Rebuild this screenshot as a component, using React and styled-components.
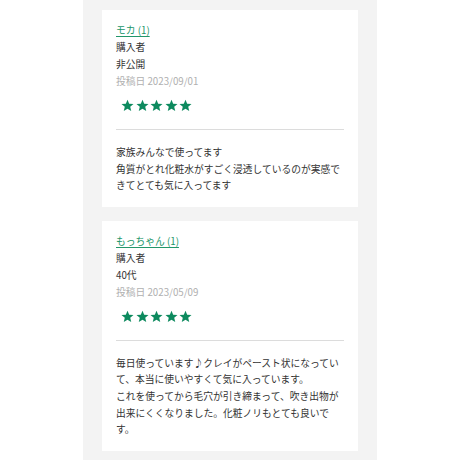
import styled, { createGlobalStyle } from "styled-components";

const GlobalStyle = createGlobalStyle`
  body {
    margin: 0;
    background: #fff;
    font-family: "Noto Sans CJK JP", sans-serif;
  }
`;

const Column = styled.div`
  width: 294px;
  margin: 0 auto;
  min-height: 460px;
  box-sizing: border-box;
  padding: 10px 19px 0;
  background-color: #f3f3f3;
  display: flex;
  flex-direction: column;
  gap: 14px;
`;

const Card = styled.div`
  background: #fff;
  padding: 12px 14px 13px;
`;

const Info = styled.div`
  font-size: 9.75px;
  line-height: 17px;
  color: #333;
`;

const Name = styled.a`
  display: block;
  color: #22966a;
  text-decoration: underline;
  text-underline-offset: 2px;
`;

const Date = styled.div`
  color: #b0b0b0;
`;

const Stars = styled.div`
  display: flex;
  gap: 1.6px;
  padding: 9px 0 0 5px;
  height: 13px;
`;

const Divider = styled.hr`
  border: none;
  border-top: 1px solid #dcdcdc;
  margin: 17px 0 14px;
`;

const Body = styled.p`
  margin: 0;
  font-size: 9.75px;
  line-height: 16.6px;
  color: #333;
  white-space: pre-line;
`;

const Star = () => (
  <svg width="13" height="13" viewBox="0 0 24 24">
    <path
      fill="#0d8a5e"
      d="M12 1.2l3.1 7.4 8 .6-6.1 5.2 1.9 7.8L12 18l-6.9 4.2 1.9-7.8L.9 9.2l8-.6z"
    />
  </svg>
);

const reviews = [
  {
    id: 1,
    name: "モカ (1)",
    status: "購入者",
    age: "非公開",
    date: "投稿日 2023/09/01",
    text: "家族みんなで使ってます\n角質がとれ化粧水がすごく浸透しているのが実感できてとても気に入ってます",
  },
  {
    id: 2,
    name: "もっちゃん (1)",
    status: "購入者",
    age: "40代",
    date: "投稿日 2023/05/09",
    text: "毎日使っています♪クレイがペースト状になっていて、本当に使いやすくて気に入っています。\nこれを使ってから毛穴が引き締まって、吹き出物が出来にくくなりました。化粧ノリもとても良いです。",
  },
];

export default function App() {
  return (
    <>
      <GlobalStyle />
      <Column>
        {reviews.map((r) => (
          <Card key={r.id}>
            <Info>
              <Name href="#">{r.name}</Name>
              <div>{r.status}</div>
              <div>{r.age}</div>
              <Date>{r.date}</Date>
            </Info>
            <Stars>
              {[0, 1, 2, 3, 4].map((i) => (
                <Star key={i} />
              ))}
            </Stars>
            <Divider />
            <Body>{r.text}</Body>
          </Card>
        ))}
      </Column>
    </>
  );
}
